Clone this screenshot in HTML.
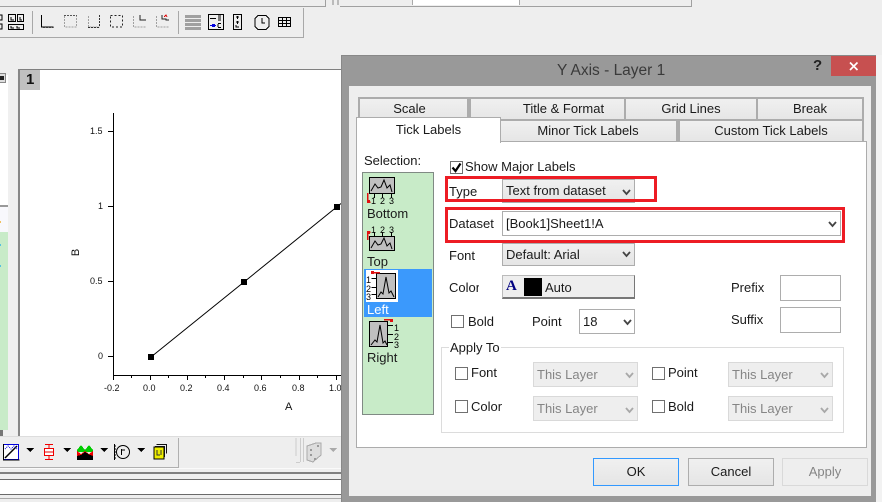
<!DOCTYPE html>
<html><head><meta charset="utf-8">
<style>
html,body{margin:0;padding:0}
body{width:882px;height:502px;overflow:hidden;background:#eee;position:relative;font-family:"Liberation Sans",sans-serif;font-size:13px;color:#1a1a1a}
div,span.a{position:absolute;box-sizing:border-box}
.t{position:absolute;white-space:nowrap;line-height:16px}
.tab{position:absolute;box-sizing:border-box;border:1px solid #acacac;border-width:2px 2px 0 0;background:linear-gradient(#f0f0f0,#e5e5e5);text-align:center;line-height:20px}
.cb{position:absolute;box-sizing:border-box;border:1px solid #adadad;background:linear-gradient(#f0f0f0,#e5e5e5);padding-left:3px;white-space:nowrap}
.cw{background:#fff}
.dis{background:#eee;border-color:#d9d9d9;color:#858585}
.chk{position:absolute;box-sizing:border-box;width:13px;height:13px;border:1px solid #707070;background:#fff}
.btn{position:absolute;box-sizing:border-box;width:86px;height:28px;top:458px;text-align:center;line-height:26px;background:linear-gradient(#f0f0f0,#e5e5e5);border:1px solid #adadad}
svg{position:absolute;overflow:visible}
</style></head><body>

<!-- top strips -->
<div style="left:0;top:6px;width:326px;height:1px;background:#a0a0a0"></div>
<div style="left:325px;top:0;width:1px;height:7px;background:#a0a0a0"></div>
<div style="left:332px;top:0;width:2px;height:5px;background:#bbb"></div>
<div style="left:337px;top:0;width:2px;height:5px;background:#bbb"></div>
<div style="left:340px;top:0;width:352px;height:7px;background:#eee;border-bottom:1px solid #a0a0a0;border-right:1px solid #a0a0a0"></div>
<div style="left:412px;top:0;width:108px;height:5px;background:#fff;border-right:1px solid #aaa;border-left:1px solid #aaa"></div>

<!-- upper toolbar -->
<div style="left:0;top:37px;width:304px;height:1px;background:#a8a8a8"></div>
<div style="left:303px;top:8px;width:1px;height:30px;background:#a8a8a8"></div>
<svg width="310" height="38" style="left:0;top:0" fill="none" shape-rendering="crispEdges">
<g stroke="#000"><path d="M0 15h2v5h-2M0 24h2v5h-2"/>
<rect x="8.5" y="14.5" width="7" height="7"/><rect x="17.5" y="14.5" width="6" height="7"/><rect x="8.5" y="24.5" width="15" height="5"/>
<path d="M11 17v3h3M20 17v3h2M11 26v2h3M17 26v2h3"/></g>
<g stroke="#a8a8a8"><path d="M32.5 11v23M178.5 11v23"/></g>
<path d="M41.5 15v12h12" stroke="#000"/><path d="M44 28v-1M47 28v-1M50 28v-1M53 28v-1" stroke="#000"/>
<g stroke="#a0a0a0" stroke-dasharray="2 1"><path d="M64.500 16v11h12v-11"/><path d="M88.500 16v11h11"/><path d="M133.500 16v11h12"/><path d="M156.500 16v11h12"/></g>
<path d="M64 15.500h13" stroke="#555" stroke-dasharray="2 1"/>
<path d="M99.500 15v12M88 27.500h12" stroke="#333" stroke-dasharray="2 1"/>
<path d="M110.500 15.500h12v11.500h-12z" stroke="#222" stroke-dasharray="2 2"/>
<path d="M140 15v5h6" stroke="#222"/><path d="M162 15v4h4v1h3" stroke="#222"/><path d="M164 17l2 -2 1 2" stroke="#d00"/>
<path d="M185 16.500h16M185 20.500h16M185 24.500h16M185 28.500h16" stroke="#a0a0a0" stroke-width="3"/>
<rect x="208.500" y="14.500" width="15" height="15" stroke="#000"/>
<path d="M210 18.500h6M218 16h3M218 18h3M218 20h3" stroke="#000"/><path d="M210 25.500h6" stroke="#00d"/><rect x="212" y="24" width="3" height="3" fill="#00d"/><path d="M218 23.500h3M218 27.500h3M218 24v3" stroke="#000"/>
<rect x="233.500" y="14.500" width="8" height="15" stroke="#000"/><path d="M236 17h3M237.500 16v3M236 22h3M237.500 21v3M236 25v2h3" stroke="#000"/>
<path d="M258 15.500h8l3 3v8l-3 3h-8l-3-3v-8z" stroke="#000"/><path d="M262 18v5h3" stroke="#000"/>
<rect x="278.500" y="17.500" width="12" height="9" stroke="#000"/><path d="M278 20.500h13M278 23.500h13M282.500 17v9M286.500 17v9" stroke="#000"/>
</svg>

<!-- left panel -->
<div style="left:0;top:70px;width:17px;height:366px;background:#f0f0f0"></div>
<div style="left:0;top:75px;width:8px;height:131px;background:#fff"></div>
<div style="left:0;top:205px;width:8px;height:2px;background:#999"></div>
<div style="left:0;top:207px;width:8px;height:25px;background:#f8f8fc"></div>
<div style="left:0;top:232px;width:8px;height:198px;background:#c8ebc8"></div>
<div style="left:0;top:73px;width:6px;height:10px;background:#ddd;border:1px solid #888;border-left:0"></div>
<div style="left:0;top:76px;width:4px;height:4px;background:#222"></div>
<div style="left:0;top:221px;width:1px;height:2px;background:#f0c060"></div>
<div style="left:0;top:244px;width:1px;height:2px;background:#55c0e0"></div>
<div style="left:0;top:265px;width:1px;height:2px;background:#55c0e0"></div>
<div style="left:0;top:430px;width:3px;height:6px;background:#777"></div>

<!-- graph window -->
<div style="left:19px;top:69px;width:325px;height:368px;background:#fff;border-left:1px solid #888;border-top:1px solid #808080"></div>
<div style="left:18px;top:69px;width:2px;height:368px;background:#888"></div>
<div style="left:20px;top:70px;width:20px;height:20px;background:#c0c0c0"></div>
<div class="t" style="left:26px;top:71px;font-size:15px;line-height:18px;color:#111;font-weight:bold">1</div>

<svg width="342" height="430" style="left:0;top:0" fill="none">
<g shape-rendering="crispEdges" stroke="#000">
<path d="M113.500 113v262M113 375.500h228"/>
<path d="M108 131.500h5M108 206.500h5M108 281.500h5M108 356.500h5"/>
<path d="M113.500 375v5M131.500 375v3M150.500 375v5M168.500 375v3M187.500 375v5M205.500 375v3M224.500 375v5M243.500 375v3M261.500 375v5M280.500 375v3M299.500 375v5M317.500 375v3M336.500 375v5"/>
</g>
<path d="M151 357L244 282L341 203.500" stroke="#000" stroke-width="1"/>
<g fill="#000"><rect x="148" y="354" width="6" height="6"/><rect x="241" y="279" width="6" height="6"/><rect x="334" y="204" width="6" height="6"/></g>
</svg>
<div class="t" style="left:90px;top:126px;font-size:9px;line-height:11px;color:#111">1.5</div>
<div class="t" style="left:98px;top:201px;font-size:9px;line-height:11px;color:#111">1</div>
<div class="t" style="left:90px;top:276px;font-size:9px;line-height:11px;color:#111">0.5</div>
<div class="t" style="left:98px;top:351px;font-size:9px;line-height:11px;color:#111">0</div>
<div class="t" style="left:104px;top:383px;font-size:9px;line-height:11px;color:#111">-0.2</div>
<div class="t" style="left:143px;top:383px;font-size:9px;line-height:11px;color:#111">0.0</div>
<div class="t" style="left:180px;top:383px;font-size:9px;line-height:11px;color:#111">0.2</div>
<div class="t" style="left:217px;top:383px;font-size:9px;line-height:11px;color:#111">0.4</div>
<div class="t" style="left:254px;top:383px;font-size:9px;line-height:11px;color:#111">0.6</div>
<div class="t" style="left:292px;top:383px;font-size:9px;line-height:11px;color:#111">0.8</div>
<div class="t" style="left:329px;top:383px;font-size:9px;line-height:11px;color:#111">1.0</div>
<div class="t" style="left:285px;top:401px;font-size:11px;line-height:13px;color:#111">A</div>
<div class="t" style="left:73px;top:246px;font-size:11px;line-height:13px;color:#111;transform:rotate(-90deg)">B</div>

<!-- bottom -->
<div style="left:0;top:436px;width:341px;height:1px;background:#ddd"></div>
<div style="left:178px;top:438px;width:1px;height:30px;background:#b0b0b0"></div>
<div style="left:0;top:467px;width:179px;height:1px;background:#b0b0b0"></div>
<div style="left:0;top:468px;width:341px;height:1px;background:#fafafa"></div>
<div style="left:0;top:472px;width:341px;height:2px;background:#7f7f7f"></div>
<div style="left:0;top:479px;width:341px;height:1px;background:#6a6a6a"></div>
<div style="left:0;top:480px;width:341px;height:14px;background:#fff"></div>
<div style="left:0;top:494px;width:341px;height:1px;background:#6a6a6a"></div>
<div style="left:0;top:498px;width:341px;height:1px;background:#a8a8a8"></div>

<svg width="342" height="40" style="left:0;top:436px" fill="none" shape-rendering="crispEdges">
<rect x="3.500" y="8.500" width="15" height="15" fill="#fff" stroke="#00d"/>
<path d="M3.500 8v16h16" stroke="#000"/>
<path d="M5 22L17 10" stroke="#000" stroke-width="1.500" shape-rendering="auto"/>
<path d="M5 13l3-3 3 3 3-3 3 3" stroke="#00d" stroke-dasharray="1 1" shape-rendering="auto"/>
<path d="M26 12h8l-4 4zM63 12h8l-4 4zM100 12h8l-4 4zM137 12h8l-4 4z" fill="#000"/>
<path d="M45 8.500h8M49 8v4M45 23.500h8M49 20v4" stroke="#e00"/>
<rect x="44.500" y="12.500" width="9" height="7" fill="#fff" stroke="#e00"/><path d="M45 16h8" stroke="#e00"/>
<path d="M77 16V14L81 9l4 5 4-5 4 5v2z" fill="#0c0"/>
<path d="M77 24V15l4 3 4-3 4 3 4-3v9z" fill="#e00"/>
<path d="M77 24V20l4-1 4-3 5 3 3 1v4z" fill="#000"/>
<path d="M114.500 8v16" stroke="#000"/><path d="M115 10h1M115 13h1M115 16h1M115 19h1M115 22h1" stroke="#000"/>
<circle cx="123" cy="16" r="6.500" stroke="#000" shape-rendering="auto"/>
<path d="M121.500 13v6M122 14h3" stroke="#000"/>
<rect x="155" y="10" width="10" height="11" fill="#222"/><path d="M156.500 8.500h10v9" stroke="#111"/>
<rect x="154" y="11" width="10" height="12" fill="#ee0" stroke="#000"/>
<path d="M157 14v5h3M161 14v5" stroke="#333"/>
<path d="M296 20v-18M300.500 2v24M303.500 2v24M296 26.500h4" stroke="#ccc"/>
<path d="M307 10l9-3 5 0v12l-8 7-6-2z" fill="#ddd" stroke="#aaa"/><path d="M310 14h2M310 19h2M314 23h2M317 10h2" stroke="#999" stroke-width="2"/>
<path d="M329 12h8l-4 4z" fill="#aaa"/>
</svg>

<!-- dialog -->
<div style="left:341px;top:55px;width:535px;height:447px;background:#999;border-left:1px solid #888;border-top:1px solid #888"></div>
<div style="left:876px;top:55px;width:6px;height:447px;background:#f2f2f2"></div>
<div style="left:349px;top:86px;width:522px;height:410px;background:#eee"></div>
<div class="t" style="left:557px;top:62px;font-size:15.500px;line-height:18px;color:#3a3a3a">Y Axis - Layer 1</div>
<div class="t" style="left:813px;top:57px;font-size:15px;line-height:18px;color:#222;font-weight:bold">?</div>
<div style="left:831px;top:56px;width:45px;height:20px;background:#c75050"></div>
<svg width="12" height="12" style="left:848px;top:60px" fill="none"><path d="M2 2.500L9.500 10M9.500 2.500L2 10" stroke="#fff" stroke-width="1.700"/></svg>

<!-- tabs -->
<div class="tab" style="left:358px;top:97px;width:111px;height:24px;border-left:2px solid #acacac;padding-right:8px">Scale</div>
<div class="tab" style="left:469px;top:97px;width:157px;height:24px;border-left:2px solid #acacac;padding-left:32px">Title &amp; Format</div>
<div class="tab" style="left:626px;top:97px;width:132px;height:24px">Grid Lines</div>
<div class="tab" style="left:758px;top:97px;width:106px;height:24px">Break</div>
<div class="tab" style="left:500px;top:119px;width:178px;height:23px">Minor Tick Labels</div>
<div class="tab" style="left:678px;top:119px;width:186px;height:23px;border-left:2px solid #acacac">Custom Tick Labels</div>

<div style="left:356px;top:141px;width:511px;height:307px;background:#fff;border:1px solid #acacac"></div>
<div style="left:356px;top:117px;width:145px;height:26px;background:#fff;border:1px solid #acacac;border-bottom:0;text-align:center;line-height:23px">Tick Labels</div>

<!-- selection -->
<div class="t" style="left:364px;top:153px">Selection:</div>
<div style="left:362px;top:172px;width:72px;height:243px;background:#c8ebc8;border:1px solid #808a84"></div>
<div style="left:364px;top:269px;width:68px;height:48px;background:#3b99fc"></div>
<div style="left:366px;top:270px;width:32px;height:32px;background:#fff"></div>
<div class="t" style="left:367px;top:206px">Bottom</div>
<div class="t" style="left:367px;top:254px">Top</div>
<div class="t" style="left:367px;top:302px;color:#fff">Left</div>
<div class="t" style="left:367px;top:350px">Right</div>
<svg width="40" height="190" style="left:362px;top:170px" fill="none" shape-rendering="crispEdges">
<g stroke="#000">
<rect x="7.500" y="7.500" width="25" height="16" fill="#c0c0c0"/>
<path d="M9 21l4-7 3 4 3-1 3-7 3 8 3-3 2 7" shape-rendering="auto"/>
<path d="M12.500 24v4M20.500 24v4M29.500 24v4"/>
<rect x="7.500" y="66.500" width="25" height="14" fill="#c0c0c0"/>
<path d="M9 78l4-7 3 4 3-1 3-6 3 8 3-3 2 6" shape-rendering="auto"/>
<path d="M12.500 62v4M20.500 62v4M29.500 62v4"/>
<rect x="14.500" y="103.500" width="19" height="25" fill="#c0c0c0"/>
<path d="M16 127l3-5 2 2 3-17 3 16 2-2 3 6" shape-rendering="auto"/>
<path d="M9.500 108.500h5M9.500 117.500h5M9.500 124.500h5"/>
<rect x="7.500" y="151.500" width="18" height="25" fill="#c0c0c0"/>
<path d="M9 175l4-5 2 2 3-17 3 18 2-2 2 4" shape-rendering="auto"/>
<path d="M26 155.500h5M26 164.500h5M26 172.500h5"/>
</g>
<g fill="#000" font-family="Liberation Sans, sans-serif" font-size="9px">
<text x="9" y="34">1</text><text x="18" y="34">2</text><text x="27" y="34">3</text>
<text x="9" y="63">1</text><text x="18" y="63">2</text><text x="27" y="63">3</text>
<text x="4" y="113">1</text><text x="4" y="122">2</text><text x="4" y="130">3</text>
<text x="32" y="161">1</text><text x="32" y="170">2</text><text x="32" y="178">3</text>
</g>
<g stroke="#e01010" stroke-width="1.500">
<path d="M5.500 23v9h3"/><path d="M5.500 70v-8h3"/><path d="M10 102.500h8"/><path d="M22 149.500h9"/>
</g>
<g fill="#e01010"><rect x="5" y="30" width="3" height="3"/><rect x="5" y="61" width="3" height="3"/><rect x="9" y="101" width="3" height="3"/><rect x="28" y="149" width="3" height="3"/></g>
</svg>

<!-- controls -->
<div class="chk" style="left:450px;top:161px"></div>
<svg width="13" height="13" style="left:450px;top:161px" fill="none"><path d="M2.500 6.500L5.500 10L10.500 2.500" stroke="#000" stroke-width="2.200"/></svg>
<div class="t" style="left:465px;top:159px">Show Major Labels</div>

<div class="t" style="left:449px;top:184px">Type</div>
<div class="cb" style="left:502px;top:179px;width:133px;height:24px;line-height:22px">Text from dataset</div>
<div class="t" style="left:449px;top:216px">Dataset</div>
<div class="cb cw" style="left:502px;top:211px;width:339px;height:25px;line-height:23px">[Book1]Sheet1!A</div>
<div class="t" style="left:449px;top:248px">Font</div>
<div class="cb" style="left:502px;top:243px;width:133px;height:23px;line-height:21px">Default: Arial</div>
<div class="t" style="left:449px;top:280px">Colo<span style="display:inline-block;width:3px;overflow:hidden;vertical-align:top">r</span></div>
<div style="left:502px;top:275px;width:133px;height:24px;background:#eee;border:1px solid #bbb;border-right:1px solid #777;border-bottom:2px solid #777"></div>
<div class="t" style="left:506px;top:278px;font-family:'Liberation Serif',serif;font-size:15px;font-weight:bold;color:#000080">A</div>
<div style="left:524px;top:278px;width:18px;height:18px;background:#000"></div>
<div class="t" style="left:545px;top:280px">Auto</div>
<div class="t" style="left:731px;top:280px">Prefix</div>
<div style="left:780px;top:275px;width:61px;height:26px;background:#fff;border:1px solid #adadad"></div>
<div class="t" style="left:731px;top:312px">Suffix</div>
<div style="left:780px;top:307px;width:61px;height:26px;background:#fff;border:1px solid #adadad"></div>
<div class="chk" style="left:451px;top:315px"></div>
<div class="t" style="left:468px;top:314px">Bold</div>
<div class="t" style="left:532px;top:314px">Point</div>
<div class="cb cw" style="left:579px;top:309px;width:56px;height:25px;line-height:23px">18</div>

<!-- arrows for combos -->
<svg width="882" height="502" style="left:0;top:0" fill="none">
<g stroke="#444" stroke-width="1.800"><path d="M623 190l3.500 4 3.500-4M829 222l3.500 4 3.500-4M623 252l3.500 4 3.500-4M624 320l3.500 4 3.500-4"/></g>
</svg>

<!-- red boxes -->
<div style="left:445px;top:176px;width:212px;height:26px;border:3px solid #ed1c24"></div>
<div style="left:445px;top:207px;width:400px;height:36px;border:3px solid #ed1c24"></div>

<!-- apply to -->
<div style="left:441px;top:347px;width:403px;height:86px;border:1px solid #dcdcdc"></div>
<div class="t" style="left:449px;top:340px;background:#fff;padding:0 1px">Apply To</div>
<div class="chk" style="left:455px;top:367px"></div><div class="t" style="left:471px;top:365px">Font</div>
<div class="chk" style="left:455px;top:400px"></div><div class="t" style="left:471px;top:399px">Color</div>
<div class="chk" style="left:652px;top:367px"></div><div class="t" style="left:668px;top:365px">Point</div>
<div class="chk" style="left:652px;top:400px"></div><div class="t" style="left:668px;top:399px">Bold</div>
<div class="cb dis" style="left:533px;top:362px;width:105px;height:25px;line-height:23px">This Layer</div>
<div class="cb dis" style="left:533px;top:396px;width:105px;height:25px;line-height:23px">This Layer</div>
<div class="cb dis" style="left:728px;top:362px;width:105px;height:25px;line-height:23px">This Layer</div>
<div class="cb dis" style="left:728px;top:396px;width:105px;height:25px;line-height:23px">This Layer</div>
<svg width="882" height="502" style="left:0;top:0" fill="none"><g stroke="#a8a8a8" stroke-width="1.800"><path d="M626 373l3.500 4 3.500-4M626 408l3.500 4 3.500-4M821 373l3.500 4 3.500-4M821 408l3.500 4 3.500-4"/></g></svg>

<div class="btn" style="left:593px;border-color:#3399ff">OK</div>
<div class="btn" style="left:688px">Cancel</div>
<div class="btn" style="left:782px;border-color:#d9d9d9;color:#858585;background:#eee">Apply</div>
</body></html>
